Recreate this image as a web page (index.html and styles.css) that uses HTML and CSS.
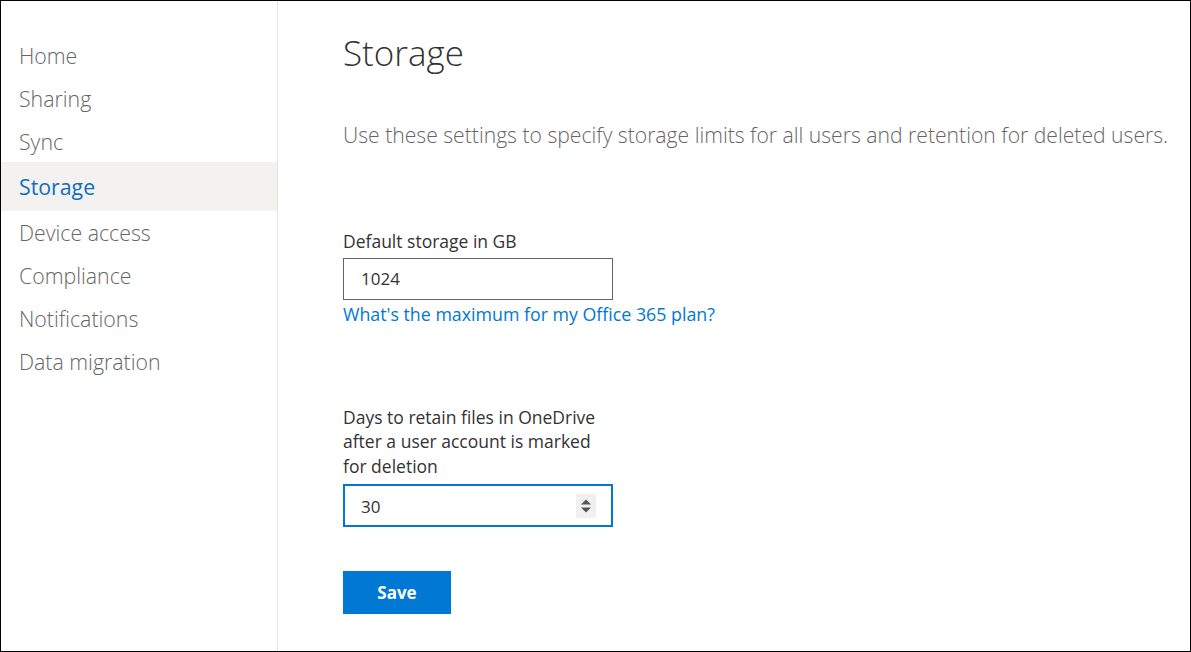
FILE: index.html
```html
<!DOCTYPE html>
<html lang="en">
<head>
<meta charset="utf-8">
<title>Storage</title>
<link rel="stylesheet" href="styles.css">
</head>
<body>
<div class="frame">
  <nav class="sidebar">
    <ul class="nav">
      <li class="nav-item">Home</li>
      <li class="nav-item">Sharing</li>
      <li class="nav-item">Sync</li>
      <li class="nav-item is-active">Storage</li>
      <li class="nav-item">Device access</li>
      <li class="nav-item">Compliance</li>
      <li class="nav-item">Notifications</li>
      <li class="nav-item">Data migration</li>
    </ul>
  </nav>
  <main class="content">
    <h1 class="title">Storage</h1>
    <p class="intro">Use these settings to specify storage limits for all users and retention for deleted users.</p>

    <section class="group group-storage">
      <label class="label" for="gb">Default storage in GB</label>
      <div class="field">
        <input class="field-input" id="gb" type="text" value="1024">
      </div>
      <a class="link" href="#">What's the maximum for my Office 365 plan?</a>
    </section>

    <section class="group group-retain">
      <label class="label" for="days">Days to retain files in OneDrive after a user account is marked for deletion</label>
      <div class="field field-focused">
        <input class="field-input" id="days" type="text" value="30">
        <span class="spinner">
          <svg width="20" height="24" viewBox="0 0 20 24" aria-hidden="true">
            <rect width="20" height="24" fill="#f0f0f0"/>
            <path d="M5 10.5 L10 5.5 L15 10.5 Z" fill="#555"/>
            <path d="M5 13.5 L10 18.5 L15 13.5 Z" fill="#555"/>
          </svg>
        </span>
      </div>
    </section>

    <button class="btn-primary" type="button">Save</button>
  </main>
</div>
</body>
</html>
```
FILE: styles.css
```css
* { box-sizing: border-box; }
html, body { margin: 0; padding: 0; background: #fff; }
body {
  font-family: "Segoe UI", "Open Sans", "Noto Sans", sans-serif;
  color: #333;
}
.frame {
  width: 1191px;
  height: 652px;
  border: 1px solid #000;
  display: flex;
  overflow: hidden;
}
.sidebar {
  width: 277px;
  flex: none;
  border-right: 1px solid #e6e6e6;
  padding-top: 33px;
}
.nav { list-style: none; margin: 0; padding: 0; }
.nav-item {
  height: 43px;
  line-height: 43px;
  padding-left: 18px;
  font-size: 21.3px;
  font-weight: 300;
  color: #666;
}
.nav-item.is-active {
  height: 49px;
  line-height: 49px;
  margin-top: -1px;
  background: #f3f2f1;
  color: #106ebe;
  font-weight: 400;
}
.content {
  flex: 1;
  padding-left: 65px;
  padding-top: 28px;
}
.title {
  margin: 0;
  font-size: 35px;
  font-weight: 300;
  line-height: 48px;
  color: #333;
}
.intro {
  margin: 44px 0 0;
  font-size: 21.15px;
  font-weight: 300;
  line-height: 28px;
  color: #666;
}
.group-storage { margin-top: 80px; }
.group-retain { margin-top: 79px; }
.label {
  display: block;
  width: 270px;
  font-size: 17.5px;
  line-height: 24.5px;
  color: #333;
  margin-bottom: 6px;
}
.group-storage .label { margin-bottom: 4px; }
.field {
  width: 270px;
  height: 42px;
  border: 1px solid #666;
  display: flex;
  align-items: center;
  padding: 0 16px 0 17px;
}
.field-focused {
  border: 2px solid #0078d4;
  height: 43px;
  padding: 2px 15px 0 16px;
}
.field-input {
  flex: 1;
  min-width: 0;
  border: 0;
  outline: none;
  padding: 0;
  font-family: inherit;
  font-size: 17px;
  color: #333;
  background: transparent;
}
.spinner { display: flex; flex: none; margin-top: -2px; }
.link {
  display: block;
  margin-top: 2px;
  font-size: 17.8px;
  line-height: 24px;
  color: #0078d4;
  text-decoration: none;
}
.btn-primary {
  display: block;
  margin-top: 44px;
  width: 108px;
  height: 43px;
  border: 0;
  background: #0078d4;
  color: #fff;
  font-family: inherit;
  font-size: 17px;
  font-weight: 700;
  cursor: pointer;
}
```
